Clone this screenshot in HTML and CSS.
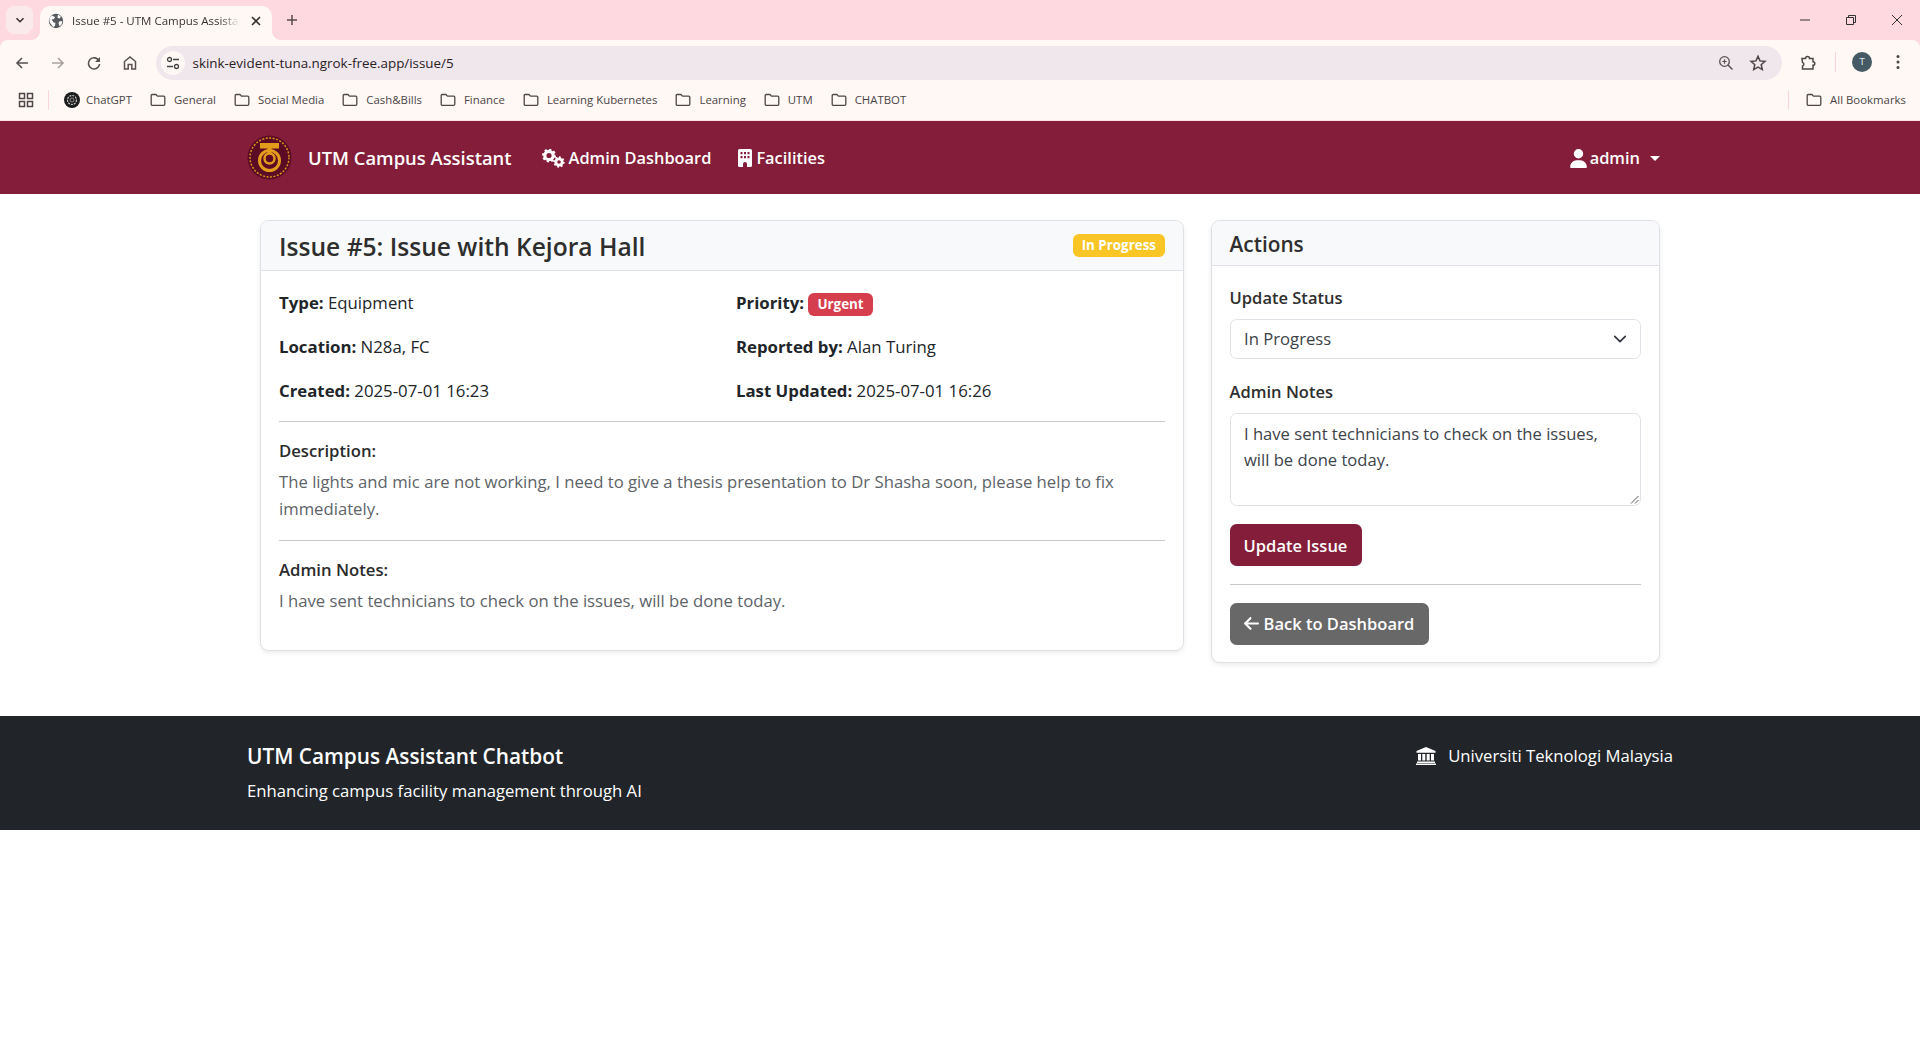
FILE: index.html
```html
<!DOCTYPE html>
<html lang="en">
<head>
<meta charset="utf-8">
<title>Issue #5 - UTM Campus Assistant</title>
<link rel="stylesheet" href="styles.css">
</head>
<body>
<svg class="defs" width="0" height="0">
  <symbol id="folder" viewBox="0 0 16 16"><path d="M1.2 3.6c0-.6.5-1.1 1.1-1.1h3.6l1.6 1.7h6.2c.6 0 1.1.5 1.1 1.1v7c0 .6-.5 1.1-1.1 1.1H2.3c-.6 0-1.1-.5-1.1-1.1z" fill="none" stroke="#4f4745" stroke-width="1.3"/></symbol>
</svg>
<header class="browser">
  <div class="tabstrip">
    <button class="tabsearch"><svg width="12" height="12" viewBox="0 0 12 12"><path d="M2.5 4.2 6 7.7l3.5-3.5" fill="none" stroke="#3a2f31" stroke-width="1.6"/></svg></button>
    <div class="tab">
      <svg class="globe" width="16" height="16" viewBox="0 0 16 16"><circle cx="8" cy="8" r="7.2" fill="#56595e"/><path d="M4 2.4 7 4 6 6 3.6 6.6 5.6 9.4 7.4 9.8 7 13 5 14 1.5 9 1.6 4.5zM10 1.6l2.8 2-1 1.8-2.4-.6zM11 8.5l3.4-.5-.8 3.6-2 1.6-1-2.5z" fill="#fff"/></svg>
      <span class="tabtitle">Issue #5 - UTM Campus Assistant</span>
      <svg class="tabclose" width="10" height="10" viewBox="0 0 10 10"><path d="M1 1l8 8M9 1 1 9" stroke="#3a2f31" stroke-width="1.6"/></svg>
    </div>
    <svg class="newtab" width="12" height="12" viewBox="0 0 12 12"><path d="M6 1v10M1 6h10" stroke="#5a4b4e" stroke-width="1.5"/></svg>
    <div class="winctl">
      <svg width="12" height="12" viewBox="0 0 12 12"><path d="M1 6h10" stroke="#333" stroke-width="1"/></svg>
      <svg width="12" height="12" viewBox="0 0 12 12"><path d="M1.5 3.5h7v7h-7zM3.5 3.5v-2h7v7h-2" fill="none" stroke="#333" stroke-width="1"/></svg>
      <svg width="12" height="12" viewBox="0 0 12 12"><path d="M1 1l10 10M11 1 1 11" stroke="#333" stroke-width="1"/></svg>
    </div>
  </div>
  <div class="toolbar">
    <svg class="tb" width="16" height="16" viewBox="0 0 16 16"><path d="M14 8H3M8 3 3 8l5 5" fill="none" stroke="#5a5052" stroke-width="1.6"/></svg>
    <svg class="tb" width="16" height="16" viewBox="0 0 16 16"><path d="M2 8h11M8 3l5 5-5 5" fill="none" stroke="#a9a2a3" stroke-width="1.6"/></svg>
    <svg class="tb" width="16" height="16" viewBox="0 0 16 16"><path d="M13.2 6.2A5.6 5.6 0 1 0 13.6 9" fill="none" stroke="#5a5052" stroke-width="1.6"/><path d="M14 2v5H9z" fill="#5a5052"/></svg>
    <svg class="tb" width="16" height="16" viewBox="0 0 16 16"><path d="M2.5 14V6.5L8 2l5.500 4.500V14H9.800V9.500H6.200V14z" fill="none" stroke="#5a5052" stroke-width="1.500"/></svg>
    <div class="omnibox">
      <span class="tune"><svg width="16" height="16" viewBox="0 0 16 16"><circle cx="4.500" cy="4.500" r="2" fill="none" stroke="#444" stroke-width="1.300"/><path d="M8 4.500h6M2 11.500h6" stroke="#444" stroke-width="1.300"/><circle cx="11.500" cy="11.500" r="2" fill="none" stroke="#444" stroke-width="1.300"/></svg></span>
      <span class="url">skink-evident-tuna.ngrok-free.app/issue/5</span>
      <svg class="zoomicon" width="16" height="16" viewBox="0 0 16 16"><circle cx="6.500" cy="6.500" r="4.800" fill="none" stroke="#5a5052" stroke-width="1.300"/><path d="M10 10l4.500 4.500" stroke="#5a5052" stroke-width="1.500"/><path d="M4.300 6.500h4.400M6.500 4.300v4.400" stroke="#5a5052" stroke-width="1.200"/></svg>
      <svg class="star" width="18" height="18" viewBox="0 0 18 18"><path d="M9 2.300l2 4.600 5 .5-3.800 3.300 1.100 4.900L9 13.100l-4.300 2.500 1.100-4.900L2 7.400l5-.5z" fill="none" stroke="#4f4547" stroke-width="1.500"/></svg>
    </div>
    <svg class="puzzle" width="18" height="18" viewBox="0 0 18 18"><path d="M3 4.500h3.500a2 2 0 0 1 4 0H14v3.200a1.800 1.800 0 0 1 0 3.600V15H3.500v-3a1.800 1.800 0 0 0 0-3.500z" fill="none" stroke="#4f4547" stroke-width="1.500"/></svg>
    <span class="vsep"></span>
    <span class="avatar">T</span>
    <svg class="kebab" width="4" height="16" viewBox="0 0 4 16"><circle cx="2" cy="2.500" r="1.500" fill="#4f4547"/><circle cx="2" cy="8" r="1.500" fill="#4f4547"/><circle cx="2" cy="13.500" r="1.500" fill="#4f4547"/></svg>
  </div>
  <div class="bookmarks">
    <svg class="apps" width="16" height="16" viewBox="0 0 16 16"><path d="M1.500 1.500h5v5h-5zM9.500 1.500h5v5h-5zM1.500 9.500h5v5h-5zM9.500 9.500h5v5h-5z" fill="none" stroke="#4f4547" stroke-width="1.500"/></svg>
    <span class="bsep"></span>
    <a class="bm bm-gpt"><svg width="16" height="16" viewBox="0 0 16 16"><circle cx="8" cy="8" r="8" fill="#1c1c1c"/><circle cx="8" cy="8" r="4.500" fill="none" stroke="#ccc" stroke-width="1.200" stroke-dasharray="2 1"/><circle cx="8" cy="8" r="2" fill="none" stroke="#aaa" stroke-width=".8"/></svg><span>ChatGPT</span></a>
    <a class="bm"><svg width="16" height="16"><use href="#folder"/></svg><span>General</span></a>
    <a class="bm"><svg width="16" height="16"><use href="#folder"/></svg><span>Social Media</span></a>
    <a class="bm"><svg width="16" height="16"><use href="#folder"/></svg><span>Cash&amp;Bills</span></a>
    <a class="bm"><svg width="16" height="16"><use href="#folder"/></svg><span>Finance</span></a>
    <a class="bm"><svg width="16" height="16"><use href="#folder"/></svg><span>Learning Kubernetes</span></a>
    <a class="bm"><svg width="16" height="16"><use href="#folder"/></svg><span>Learning</span></a>
    <a class="bm"><svg width="16" height="16"><use href="#folder"/></svg><span>UTM</span></a>
    <a class="bm"><svg width="16" height="16"><use href="#folder"/></svg><span>CHATBOT</span></a>
    <span class="bspacer"></span>
    <span class="bsep"></span>
    <a class="bm bm-all"><svg width="16" height="16"><use href="#folder"/></svg><span>All Bookmarks</span></a>
  </div>
</header>

<nav class="navbar">
  <div class="nav-inner">
    <svg class="logo" width="45" height="45" viewBox="0 0 45 45">
      <circle cx="22.500" cy="22.500" r="22" fill="#5c0b24"/>
      <circle cx="22.500" cy="22.500" r="19.500" fill="none" stroke="#d9931c" stroke-width="1.500" stroke-dasharray="2 1.500"/>
      <path d="M13 8h19v5.500h-7.500v5h-4v-5H13z" fill="#e39c1b"/>
      <circle cx="22.500" cy="25.500" r="10" fill="none" stroke="#e39c1b" stroke-width="3"/>
      <circle cx="22.500" cy="23.500" r="5" fill="#5c0b24" stroke="#e39c1b" stroke-width="2.500"/>
    </svg>
    <a class="brand">UTM Campus Assistant</a>
    <a class="navlink nav-admin">
      <svg class="gears" width="23" height="19" viewBox="0 0 23 19">
        <circle cx="7" cy="6.500" r="4.200" fill="none" stroke="#fff" stroke-width="3.200"/>
        <circle cx="7" cy="6.500" r="6" fill="none" stroke="#fff" stroke-width="2" pathLength="16" stroke-dasharray="1 1"/>
        <circle cx="17" cy="13" r="3.200" fill="none" stroke="#fff" stroke-width="2.800"/>
        <circle cx="17" cy="13" r="4.800" fill="none" stroke="#fff" stroke-width="1.800" pathLength="16" stroke-dasharray="1 1"/>
      </svg>
      Admin Dashboard</a>
    <a class="navlink nav-fac">
      <svg width="14" height="18" viewBox="0 0 14 18"><path fill-rule="evenodd" fill="#fff" d="M1.500 0h11A1.500 1.500 0 0 1 14 1.500V16.500A1.500 1.500 0 0 1 12.500 18H9V15a2 2 0 0 0-4 0v3H1.500A1.500 1.500 0 0 1 0 16.500V1.500A1.500 1.500 0 0 1 1.500 0zM2.500 3v2.200h2V3zM6 3v2.200h2V3zM9.500 3v2.200h2V3zM2.500 7v2.200h2V7zM6 7v2.200h2V7zM9.500 7v2.200h2V7z"/></svg>
      Facilities</a>
    <a class="navlink nav-user">
      <svg width="17" height="19" viewBox="0 0 448 512"><path fill="#fff" d="M224 256A128 128 0 1 0 224 0a128 128 0 1 0 0 256zm-45.700 48C79.800 304 0 383.800 0 482.300C0 498.700 13.300 512 29.700 512H418.300c16.400 0 29.700-13.300 29.700-29.700C448 383.800 368.200 304 269.700 304H178.300z"/></svg>
      admin<span class="caret"></span></a>
  </div>
</nav>

<main class="layout">
  <section class="card">
    <div class="card-head head-main">
      <h1 class="title">Issue #5: Issue with Kejora Hall</h1>
      <span class="badge badge-warn">In Progress</span>
    </div>
    <div class="card-body">
      <div class="meta">
        <p><strong>Type:</strong> Equipment</p>
        <p><strong>Priority:</strong> <span class="badge badge-danger">Urgent</span></p>
        <p><strong>Location:</strong> N28a, FC</p>
        <p><strong>Reported by:</strong> Alan Turing</p>
        <p><strong>Created:</strong> 2025-07-01 16:23</p>
        <p><strong>Last Updated:</strong> 2025-07-01 16:26</p>
      </div>
      <hr class="rule">
      <h2 class="sub">Description:</h2>
      <p class="muted">The lights and mic are not working, I need to give a thesis presentation to Dr Shasha soon, please help to fix immediately.</p>
      <hr class="rule">
      <h2 class="sub">Admin Notes:</h2>
      <p class="muted">I have sent technicians to check on the issues, will be done today.</p>
    </div>
  </section>

  <aside class="card">
    <div class="card-head head-side"><h2 class="side-title">Actions</h2></div>
    <div class="card-body side-body">
      <label class="label">Update Status</label>
      <div class="select">In Progress<svg width="14" height="14" viewBox="0 0 16 16"><path d="M2 5l6 6 6-6" fill="none" stroke="#343a40" stroke-width="2" stroke-linecap="round" stroke-linejoin="round"/></svg></div>
      <label class="label">Admin Notes</label>
      <div class="textarea">I have sent technicians to check on the issues, will be done today.<svg class="grip" width="9" height="9" viewBox="0 0 9 9"><path d="M8.500 1 1 8.500M8.500 5 5 8.500" stroke="#555" stroke-width="1"/></svg></div>
      <button class="btn btn-primary">Update Issue</button>
      <hr class="rule">
      <button class="btn btn-back"><svg width="15" height="17" viewBox="0 0 448 512"><path fill="#fff" d="M9.400 233.400c-12.500 12.500-12.500 32.800 0 45.300l160 160c12.500 12.500 32.800 12.500 45.300 0s12.500-32.800 0-45.300L109.200 288 416 288c17.700 0 32-14.300 32-32s-14.300-32-32-32l-306.700 0L214.600 118.600c12.500-12.500 12.500-32.800 0-45.300s-32.800-12.500-45.300 0l-160 160z"/></svg>Back to Dashboard</button>
    </div>
  </aside>
</main>

<footer class="footer">
  <div class="foot-inner">
    <div class="foot-left">
      <h3 class="foot-title">UTM Campus Assistant Chatbot</h3>
      <p class="foot-text">Enhancing campus facility management through AI</p>
    </div>
    <div class="foot-right">
      <svg width="20" height="18" viewBox="0 0 20 18"><path fill="#fff" d="M10 0l9.500 4v1.800H.5V4zM2 7h3v6.500H2zM6.300 7h3v6.500h-3zM10.700 7h3v6.500h-3zM15 7h3v6.500h-3zM1 14.500h18V16H1zM0 16.500h20V18H0z"/></svg>
      <span>Universiti Teknologi Malaysia</span>
    </div>
  </div>
</footer>
</body>
</html>
```
FILE: styles.css
```css
* { box-sizing: border-box; }
html, body { margin: 0; padding: 0; background: #fff; }
body { height: 1050px; overflow: hidden; font-family: "Open Sans", "Noto Sans", sans-serif; font-size: 16.7px; line-height: 26.4px; color: #212529; }
.defs { position: absolute; }
svg { display: block; flex: none; }

/* browser chrome */
.browser { background: #fed9df; font-family: "Open Sans", sans-serif; }
.tabstrip { height: 40px; display: flex; align-items: flex-start; padding-left: 6px; }
.tabsearch { width: 27px; height: 28px; margin-top: 6px; border: 0; padding: 0; border-radius: 8px; background: #fbeaec; display: flex; align-items: center; justify-content: center; }
.tab { position: relative; width: 232px; height: 34px; margin: 6px 0 0 7px; background: #fff8f5; border-radius: 10px 10px 0 0; display: flex; align-items: center; padding: 0 11px 4px 8px; font-size: 11.5px; color: #3a3234; }
.tab::before, .tab::after { content: ""; position: absolute; bottom: 0; width: 10px; height: 10px; }
.tab::before { left: -10px; background: radial-gradient(circle at 0 0, #fed9df 10px, #fff8f5 10.5px); }
.tab::after { right: -10px; background: radial-gradient(circle at 100% 0, #fed9df 10px, #fff8f5 10.5px); }
.tabtitle { margin-left: 8px; width: 168px; white-space: nowrap; overflow: hidden; -webkit-mask-image: linear-gradient(90deg, #000 88%, transparent); mask-image: linear-gradient(90deg, #000 88%, transparent); }
.tabclose { margin-left: 11px; }
.newtab { margin: 14px 0 0 14px; }
.winctl { margin-left: auto; margin-top: 14px; display: flex; gap: 34px; padding-right: 17px; }
.toolbar { height: 40px; background: #fff8f5; border-radius: 8px 8px 0 0; display: flex; align-items: flex-end; padding-left: 14px; }
.tb { margin: 0 20px 9px 0; }
.omnibox { margin-left: -2px; width: 1626px; height: 34px; border-radius: 17px; background: #f0e7ec; display: flex; align-items: center; padding-left: 5px; }
.tune { width: 24px; height: 24px; border-radius: 50%; background: #fff8f5; display: flex; align-items: center; justify-content: center; }
.url { margin-left: 7.5px; font-size: 13.4px; color: #28201f; }
.zoomicon { margin-left: auto; }
.star { margin: 0 15px 0 15px; }
.puzzle { margin: 0 0 8px 17px; }
.vsep { width: 1px; height: 20px; background: #fbd6dc; margin: 0 16px 8px 18px; }
.avatar { width: 20px; height: 20px; margin-bottom: 8px; border-radius: 50%; background: #455a64; color: #e8eef0; font-size: 9.500px; line-height: 20px; text-align: center; }
.kebab { margin: 0 0 10px 24px; }
.bookmarks { height: 41px; background: #fff8f5; border-bottom: 1px solid #f8dfe0; display: flex; align-items: center; padding: 0 14px 0 18px; font-size: 11.4px; color: #4c4446; }
.apps { margin-right: 14px; }
.bsep { width: 1px; height: 20px; background: #fbd6dc; }
.bm { display: flex; align-items: center; gap: 8px; margin-right: 18px; white-space: nowrap; }
.bm-gpt { margin-left: 15px; gap: 6px; }
.bspacer { flex: 1; }
.bm-all { margin: 0 0 0 17px; gap: 8px; }

/* navbar */
.navbar { height: 73px; background: #841d39; padding-top: 1px; }
.nav-inner { width: 1424px; height: 100%; margin: 0 auto; display: flex; align-items: center; color: #fff; }
.logo { margin-left: -1px; margin-top: -1px; }
.brand { margin-left: 16px; font-size: 18.4px; font-weight: 600; }
.navlink { display: flex; align-items: center; font-size: 16.4px; font-weight: 600; }
.nav-admin { margin-left: 30px; gap: 4px; }
.nav-fac { margin-left: 27px; gap: 4px; }
.nav-user { margin-left: auto; gap: 3px; margin-right: 12px; }
.caret { width: 0; height: 0; margin-left: 7px; border: 5px solid transparent; border-top-color: #fff; border-bottom: 0; }

/* layout */
.layout { width: 1400px; margin: 26px auto 53px; display: grid; grid-template-columns: 924px 449px; gap: 27px; align-items: start; }
.card { border: 1px solid #dfe0e6; border-radius: 8.800px; box-shadow: 0 2px 5px rgba(0, 0, 0, .08); background: #fff; overflow: hidden; }
.card-head { background: #f8f9fa; border-bottom: 1px solid #dfe2e6; padding: 8.800px 18px; }
.head-side { padding-left: 17.600px; }
.head-main { display: flex; justify-content: space-between; align-items: center; }
.title { margin: 0; padding-top: 1px; height: 31.700px; font-size: 24.6px; line-height: 31.700px; font-weight: 600; color: #2e2e2e; }
.side-title { margin: 0; padding-top: 1px; height: 26.400px; font-size: 20.800px; line-height: 26.400px; font-weight: 600; color: #2e2e2e; }
.card-body { padding: 17.600px 18px 17.600px; }
.side-body { padding: 17.600px; }
.meta { display: grid; grid-template-columns: 1fr 1fr; column-gap: 24px; font-size: 16.8px; }
.meta p { margin: 0 0 16.600px; padding-top: 1px; }
.meta p:nth-child(even) { margin-left: 2px; }
strong { font-weight: 700; }
.badge { display: inline-block; padding: 0 9px; height: 23px; line-height: 23px; border-radius: 6px; font-size: 13.4px; font-weight: 700; color: #fff; vertical-align: 0; }
.badge-warn { background: #f9c626; }
.badge-danger { background: #d63e4d; }
.rule { height: 1px; margin: 0 0 17.600px; border: 0; background: #c9c9cb; }
.sub { margin: 0 0 7.800px; padding-top: 1px; font-size: 16.700px; line-height: 21px; font-weight: 600; color: #2b2b2b; }
.muted { margin: 0 0 17.600px; color: #5d6368; }
.label { display: block; margin-bottom: 7.800px; padding-top: 1px; font-size: 16.5px; font-weight: 600; color: #2e2e2e; }
.select { height: 40px; margin-bottom: 19px; border: 1px solid #dee2e6; border-radius: 6.600px; padding: 0 13.400px; display: flex; align-items: center; justify-content: space-between; color: #3d4349; }
.textarea { position: relative; height: 93px; margin-bottom: 18.400px; border: 1px solid #dee2e6; border-radius: 6.600px; padding: 6.600px 13.400px; color: #3d4349; font-size: 16.6px; }
.grip { position: absolute; right: 1px; bottom: 1px; }
.btn { display: flex; align-items: center; height: 42px; border: 0; border-radius: 6.600px; padding: 0 14px; color: #fff; font-family: inherit; font-size: 16.5px; font-weight: 600; white-space: nowrap; }
.btn-primary { width: 132px; background: #841d39; margin-bottom: 17.600px; }
.btn-back { width: 199px; background: #686868; gap: 5px; }

/* footer */
.footer { height: 114px; background: #212529; color: #fff; padding-top: 26.400px; }
.foot-inner { width: 1424px; margin: 0 auto; display: flex; justify-content: space-between; align-items: flex-start; }
.foot-left { margin-left: -1px; }
.foot-title { margin: 0 0 8.800px; font-size: 20.800px; line-height: 26.400px; font-weight: 600; }
.foot-text { margin: 0; }
.foot-right { display: flex; align-items: center; gap: 12px; margin-right: -1px; }
```
